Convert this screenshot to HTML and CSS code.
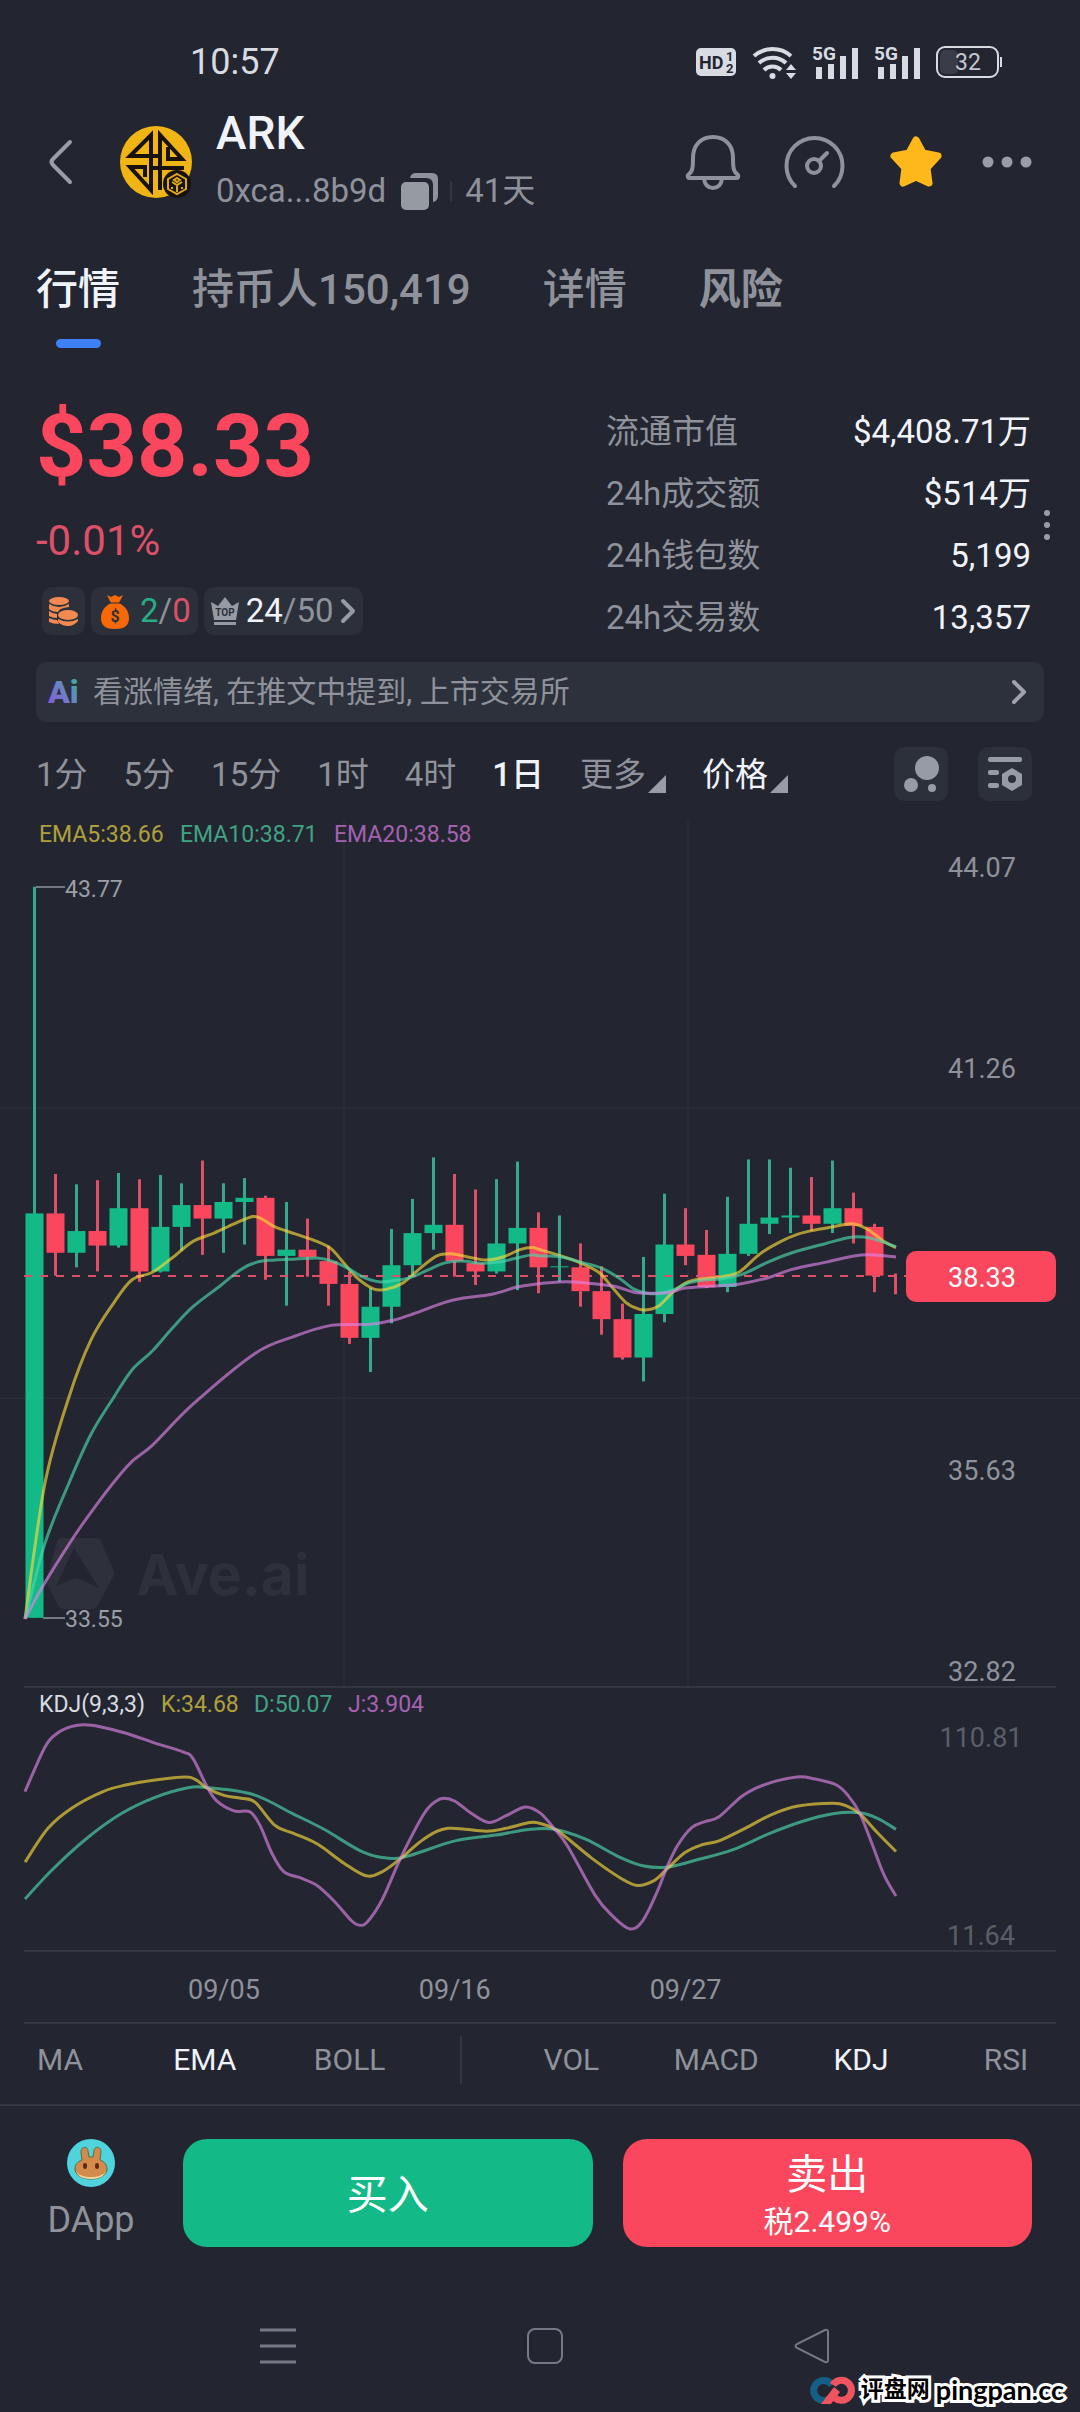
FILE: index.html
```html
<!DOCTYPE html>
<html lang="zh-CN">
  <head>
    <meta charset="UTF-8">
    <meta name="viewport" content="width=device-width, initial-scale=1">
    <title>ARK 行情</title>
    <link rel="stylesheet" href="styles.css">
  </head>

  <body>
    <!-- Status bar -->
    <div class="status-bar">
      <span class="clock">10:57</span>
      <div class="status-icons">
        <svg width="40" height="28" viewBox="0 0 40 28">
          <rect width="40" height="28" rx="5" fill="#d9dbe2"/>
          <text x="3" y="21" class="hd-text">HD</text>
          <text x="30" y="13" class="hd-num">1</text>
          <text x="30" y="25" class="hd-num">2</text>
        </svg>
        <svg width="44" height="34" viewBox="0 0 44 34">
          <g fill="none" stroke="#d9dbe2" stroke-width="4">
            <path d="M2 11a28 28 0 0 1 37 0"/>
            <path d="M7 18a20 20 0 0 1 27 0"/>
            <path d="M12 25a12 12 0 0 1 17 0"/>
          </g>
          <circle cx="20.500" cy="31" r="3" fill="#d9dbe2"/>
          <path d="M34 25l5-6 5 6zM34 28h10l-5 6z" fill="#d9dbe2"/>
        </svg>
        <svg width="46" height="36" viewBox="0 -2 46 36">
          <text x="0" y="14" class="net-text">5G</text>
          <path d="M4 21h6v12H4zM16 18h6v15h-6zM28 10h6v23h-6zM40 2h6v31h-6z" fill="#d9dbe2"/>
        </svg>
        <svg width="46" height="36" viewBox="0 -2 46 36">
          <text x="0" y="14" class="net-text">5G</text>
          <path d="M4 21h6v12H4zM16 18h6v15h-6zM28 10h6v23h-6zM40 2h6v31h-6z" fill="#d9dbe2"/>
        </svg>
        <svg width="66" height="32" viewBox="0 0 66 32">
          <rect x="4" y="4" width="18" height="24" rx="5" fill="#3a3d47"/>
          <rect x="1" y="1" width="61" height="30" rx="8" fill="none" stroke="#d9dbe2" stroke-width="2"/>
          <path d="M65 11v10" stroke="#d9dbe2" stroke-width="2"/>
          <text x="32" y="24" text-anchor="middle" class="battery-text">32</text>
        </svg>
      </div>
    </div>

    <!-- Token header -->
    <header class="header">
      <button class="icon-btn back" aria-label="返回">
        <svg width="24" height="46" viewBox="0 0 24 46">
          <path d="M22 3L5 20q-3 3 0 6l17 17" fill="none" stroke="#9a9da6" stroke-width="4" stroke-linecap="round"/>
        </svg>
      </button>
      <svg class="token-logo" width="72" height="72" viewBox="0 0 72 72">
        <circle cx="36" cy="36" r="36" fill="#f0b415"/>
        <g fill="none" stroke="#17130c" stroke-width="4">
          <path d="M40 30H10L31 9v55L10 41h15v10"/>
          <path d="M31 30h9M40 64V9l22 24H48V21M31 42h33"/>
        </g>
        <circle cx="57" cy="58" r="14" fill="#17130c"/>
        <path d="M57 48l9 5v10l-9 5-9-5V53z" fill="none" stroke="#e0a818" stroke-width="2"/>
        <path d="M52 56l5 3 5-3M57 59v7M52 61v2M62 61v2M57 52l3 2-3 2-3-2z" fill="none" stroke="#e0a818" stroke-width="2"/>
      </svg>
      <div class="token-info">
        <h1>ARK</h1>
        <div class="token-meta">
          <span>0xca...8b9d</span>
          <button class="icon-btn copy" aria-label="复制">
            <svg width="37" height="37" viewBox="0 0 37 37">
              <path d="M9 5q1-5 6-5h16q6 0 6 6v16q0 6-5 7V12q0-7-7-7z" fill="#8e939b"/>
              <rect y="9" width="28" height="28" rx="5" fill="#969ba2"/>
            </svg>
          </button>
          <span class="meta-line"></span>
          <span>41天</span>
        </div>
      </div>
      <div class="header-actions">
        <button class="icon-btn" aria-label="提醒">
          <svg width="54" height="56" viewBox="0 0 54 56">
            <g fill="none" stroke="#8f929b" stroke-width="4" stroke-linejoin="round">
              <path d="M7 24C7 11 15 3 27 3s20 8 20 21c0 12 1 14 5 17 1 2 0 3-2 3H4c-2 0-3-1-2-3 4-3 5-5 5-17z"/>
              <path d="M18 45c1 6 4 9 9 9s8-3 9-9"/>
            </g>
          </svg>
        </button>
        <button class="icon-btn" aria-label="仪表盘">
          <svg width="61" height="54" viewBox="0 0 61 54">
            <g fill="none" stroke="#8f929b" stroke-width="4" stroke-linecap="round">
              <path d="M11 51a28 28 0 1 1 39 0"/>
              <circle cx="30" cy="31" r="7"/>
              <path d="M35 26l8-8"/>
            </g>
          </svg>
        </button>
        <button class="icon-btn" aria-label="收藏">
          <svg width="54" height="52" viewBox="0 0 54 52">
            <path d="M27 4l7 13 15 3-11 12 2 15-13-6-13 6 2-15L5 20l15-3z" fill="#ffb81c" stroke="#ffb81c" stroke-width="7" stroke-linejoin="round"/>
          </svg>
        </button>
        <button class="icon-btn more" aria-label="更多">
          <svg width="50" height="12" viewBox="0 0 50 12">
            <g fill="#9a9da6">
              <circle cx="6" cy="6" r="5.500"/>
              <circle cx="25" cy="6" r="5.500"/>
              <circle cx="44" cy="6" r="5.500"/>
            </g>
          </svg>
        </button>
      </div>
    </header>

    <nav class="tabs">
      <button class="tab active">行情</button>
      <button class="tab">持币人150,419</button>
      <button class="tab">详情</button>
      <button class="tab strong">风险</button>
    </nav>

    <!-- Price and stats -->
    <section class="overview">
      <div class="price-box">
        <div class="price">$38.33</div>
        <div class="change">-0.01%</div>
        <div class="chips">
          <button class="chip chip-coins" aria-label="持仓">
            <svg width="29" height="29" viewBox="0 0 29 29">
              <g fill="#f08a50">
                <ellipse cx="10" cy="4" rx="10" ry="4"/>
                <path d="M0 7q10 6 20 0v3q-10 1-11 5-6 0-9-3z"/>
                <path d="M0 14q4 3 8 3v4q-5 0-8-2zM0 21q4 2 8 2l2 4q-6 0-10-2z"/>
                <ellipse cx="19" cy="18" rx="10" ry="5"/>
                <path d="M9 22q10 5 20 0v2q-4 5-10 5t-10-4z"/>
              </g>
            </svg>
          </button>
          <button class="chip chip-bag">
            <svg width="28" height="35" viewBox="0 0 28 35">
              <path d="M6 1l4 2 4-2 4 2 4-2-4 8c6 3 10 8 10 15 0 8-5 11-14 11S0 32 0 24C0 17 4 12 10 9z" fill="#f96807"/>
              <path d="M8 9h12" stroke="#2b303b" stroke-width="1"/>
              <text x="14" y="28" text-anchor="middle" class="bag-text">$</text>
            </svg>
            <span><span class="up">2</span>/<span class="down">0</span></span>
          </button>
          <button class="chip chip-top">
            <svg width="28" height="28" viewBox="0 0 28 28">
              <path d="M0 5l7 4 7-9 7 9 7-4-3 18H3zM3 25h22v3H3z" fill="#959aa3"/>
              <text x="14" y="19" text-anchor="middle" class="top-text">TOP</text>
            </svg>
            <span><span class="white">24</span>/50</span>
            <svg width="15" height="24" viewBox="0 0 15 24">
              <path d="M2 2l10 10L2 22" fill="none" stroke="#959aa3" stroke-width="4" stroke-linecap="round" stroke-linejoin="round"/>
            </svg>
          </button>
        </div>
      </div>
      <dl class="stats">
        <div><dt>流通市值</dt><dd>$4,408.71万</dd></div>
        <div><dt>24h成交额</dt><dd>$514万</dd></div>
        <div><dt>24h钱包数</dt><dd>5,199</dd></div>
        <div><dt>24h交易数</dt><dd>13,357</dd></div>
      </dl>
      <svg class="stats-more" width="8" height="32" viewBox="0 0 8 32">
        <g fill="#9a9da6">
          <circle cx="4" cy="4" r="3"/>
          <circle cx="4" cy="16" r="3"/>
          <circle cx="4" cy="28" r="3"/>
        </g>
      </svg>
    </section>

    <a class="ai-bar" href="#">
      <svg width="34" height="40" viewBox="0 0 34 40">
        <defs>
          <linearGradient id="ai-fill" x1="0" x2="1" y1="1" y2="0">
            <stop offset="0" stop-color="#8a4fe0"/>
            <stop offset="0.500" stop-color="#6f7fc8"/>
            <stop offset="1" stop-color="#2fb896"/>
          </linearGradient>
        </defs>
        <text x="0" y="31" class="ai-text">Ai</text>
      </svg>
      <span>看涨情绪, 在推文中提到, 上市交易所</span>
      <svg class="ai-arrow" width="15" height="26" viewBox="0 0 15 26">
        <path d="M2 3l10 10L2 23" fill="none" stroke="#a0a3ab" stroke-width="4" stroke-linecap="round" stroke-linejoin="round"/>
      </svg>
    </a>

    <!-- Intervals -->
    <div class="intervals">
      <button>1分</button>
      <button>5分</button>
      <button>15分</button>
      <button>1时</button>
      <button>4时</button>
      <button class="active">1日</button>
      <button class="with-caret">更多<span class="caret"></span></button>
      <button class="with-caret price-mode">价格<span class="caret"></span></button>
      <div class="chart-tools">
        <button class="tool" aria-label="气泡">
          <svg width="36" height="38" viewBox="0 0 36 38">
            <g fill="#979ba5">
              <circle cx="24" cy="13" r="12"/>
              <circle cx="8" cy="30" r="7"/>
              <circle cx="29" cy="33" r="4"/>
            </g>
          </svg>
        </button>
        <button class="tool" aria-label="指标设置">
          <svg width="34" height="34" viewBox="0 0 34 34">
            <g fill="#979ba5">
              <rect width="34" height="5" rx="2"/>
              <rect y="13" width="11" height="5" rx="2"/>
              <rect y="26" width="11" height="5" rx="2"/>
              <path d="M24 11l10 6v11l-10 6-10-6V17z"/>
            </g>
            <circle cx="24" cy="22" r="4" fill="#2b303b"/>
          </svg>
        </button>
      </div>
    </div>

    <!-- Price chart -->
    <svg class="chart" viewBox="0 0 1080 866">
      <g class="grid">
        <path d="M0 288H1080M0 578H1080M344 0V866M688 0V866"/>
      </g>
      <g class="brand-mark">
        <path fill-rule="evenodd" d="M61 718h34q4 0 6 3l12 28q2 4 0 8l-15 28q-2 4-6 4H64q-4 0-6-4l-11-21q-2-3 0-7l10-35q1-4 4-4zM74 728L56 766l14-6 6-2 6 2 17 8z"/>
        <text x="136" y="775">Ave.ai</text>
      </g>
      <g id="candles"></g>
      <path class="now-line" d="M24 456H906"/>
      <g id="ema"></g>
      <g class="legend">
        <text x="39" y="22" class="c-yellow">EMA5:38.66</text>
        <text x="180" y="22" class="c-green">EMA10:38.71</text>
        <text x="334" y="22" class="c-purple">EMA20:38.58</text>
      </g>
      <path class="tick" d="M36 67H65M43 798H65"/>
      <g class="mark">
        <text x="65" y="77">43.77</text>
        <text x="65" y="807">33.55</text>
      </g>
      <g class="axis">
        <text x="982" y="57">44.07</text>
        <text x="982" y="258">41.26</text>
        <text x="982" y="660">35.63</text>
        <text x="982" y="861">32.82</text>
      </g>
      <rect x="906" y="431" width="150" height="51" rx="10" fill="#fa475d"/>
      <text x="982" y="467" class="now-text">38.33</text>
    </svg>

    <!-- KDJ chart -->
    <svg class="chart" viewBox="0 0 1080 264">
      <path class="rule" d="M24 1H1056"/>
      <g id="kdj"></g>
      <g class="legend">
        <text x="39" y="26" class="c-white">KDJ(9,3,3)</text>
        <text x="161" y="26" class="c-yellow">K:34.68</text>
        <text x="254" y="26" class="c-green">D:50.07</text>
        <text x="348" y="26" class="c-purple">J:3.904</text>
      </g>
      <g class="axis dim">
        <text x="981" y="61">110.81</text>
        <text x="981" y="259">11.64</text>
      </g>
    </svg>

    <div class="dates">
      <span>09/05</span>
      <span>09/16</span>
      <span>09/27</span>
    </div>

    <div class="indicators">
      <button>MA</button>
      <button class="active">EMA</button>
      <button>BOLL</button>
      <span class="split"></span>
      <button>VOL</button>
      <button>MACD</button>
      <button class="active">KDJ</button>
      <button>RSI</button>
    </div>

    <footer class="trade-bar">
      <a class="dapp" href="#">
        <svg width="48" height="48" viewBox="0 0 48 48">
          <circle cx="24" cy="24" r="24" fill="#4fd3dc"/>
          <path d="M15 21l-1-8c0-6 7-6 7-1l1 6h4l1-6c0-5 7-5 7 1l-1 8c5 2 7 5 7 9 0 6-7 10-16 10S8 36 8 30c0-4 2-7 7-9z" fill="#d38a4d" stroke="#5c6b3c" stroke-width="1"/>
          <path d="M9 32c2 4 8 6 15 6s13-2 15-6c-1 5-7 8-15 8S10 37 9 32z" fill="#f6d9a0"/>
          <ellipse cx="18" cy="27" rx="2" ry="3" fill="#5a2a10"/>
          <ellipse cx="30" cy="27" rx="2" ry="3" fill="#5a2a10"/>
        </svg>
        <span>DApp</span>
      </a>
      <button class="trade buy">买入</button>
      <button class="trade sell">卖出<small>税2.499%</small></button>
    </footer>

    <!-- System navigation -->
    <div class="system-nav">
      <button class="icon-btn" aria-label="最近任务">
        <svg width="36" height="36" viewBox="0 0 36 36">
          <path d="M0 2h36M0 18h36M0 34h36" stroke="#757985" stroke-width="3"/>
        </svg>
      </button>
      <button class="icon-btn" aria-label="主页">
        <svg width="36" height="36" viewBox="0 0 36 36">
          <rect x="1" y="1" width="34" height="34" rx="7" fill="none" stroke="#757985" stroke-width="2"/>
        </svg>
      </button>
      <button class="icon-btn" aria-label="返回上一页">
        <svg width="36" height="36" viewBox="0 0 36 36">
          <path d="M31 2L3 16q-3 2 0 4l28 14q3 1 3-2V4q0-3-3-2z" fill="none" stroke="#757985" stroke-width="2"/>
        </svg>
      </button>
    </div>

    <div class="site-mark">
      <svg width="46" height="30" viewBox="0 0 46 30">
        <path d="M20 24a10 10 0 1 1 3-14" fill="none" stroke="#155f86" stroke-width="7"/>
        <path d="M24 10a10 10 0 1 1 2 13" fill="none" stroke="#ef5560" stroke-width="7"/>
        <path d="M12 29h10l9-12-6-5z" fill="#ef5560"/>
      </svg>
      <span class="site-cn">评盘网</span>
      <span class="site-en">pingpan.cc</span>
    </div>

    <script src="chart.js"></script>
  </body>
</html>
```
FILE: styles.css
```css
* {
  box-sizing: border-box;
}

body {
  margin: 0;
  position: relative;
  background-color: #232630;
  color: #8f929b;
  font-family: Roboto, "Noto Sans CJK SC", sans-serif;
  font-size: 33px;
}

button {
  padding: 0;
  border: none;
  background: none;
  color: inherit;
  font: inherit;
  white-space: nowrap;
  cursor: pointer;
}

a {
  color: inherit;
  text-decoration: none;
}

svg {
  display: block;
  flex: none;
  overflow: visible;
}

/* Status bar */
.status-bar {
  display: flex;
  align-items: center;
  justify-content: space-between;
  padding: 44px 78px 0 190px;
}

.clock {
  color: #d9dbe2;
  font-size: 36px;
  line-height: 36px;
}

.status-icons {
  display: flex;
  align-items: center;
  gap: 16px;
}

.hd-text {
  font-size: 18px;
  font-weight: 700;
  fill: #232630;
}

.hd-num {
  font-size: 13px;
  font-weight: 700;
  fill: #232630;
}

.net-text {
  font-size: 19px;
  font-weight: 700;
  fill: #d9dbe2;
}

.battery-text {
  font-size: 23px;
  fill: #c5c7ce;
}

/* Header */
.header {
  display: flex;
  align-items: center;
  padding: 28px 48px 0;
}

.token-logo {
  margin-left: 48px;
}

.token-info {
  margin-left: 24px;
}

.token-info h1 {
  margin: 0 0 8px;
  color: #f1f3fa;
  font-size: 46px;
  font-weight: 500;
  line-height: 50px;
}

.token-meta {
  display: flex;
  align-items: center;
  line-height: 50px;
}

.copy {
  margin-left: 15px;
}

.meta-line {
  width: 2px;
  height: 20px;
  margin: 0 13px 0 12px;
  background-color: #343741;
}

.header-actions {
  display: flex;
  align-items: center;
  gap: 44px;
  margin-left: auto;
}

.more {
  margin-left: -5px;
}

/* Tabs */
.tabs {
  display: flex;
  align-items: flex-start;
  gap: 72px;
  padding: 44px 36px 0;
}

.tab {
  font-size: 42px;
  font-weight: 500;
  line-height: 60px;
}

.tab.active {
  color: #f1f3fa;
}

.tab.strong {
  font-weight: 700;
}

.tab::after {
  content: "";
  display: block;
  width: 45px;
  height: 9px;
  margin: 19px auto 0;
  border-radius: 5px;
}

.tab.active::after {
  background-color: #3f80f7;
}

/* Overview */
.overview {
  display: flex;
  padding: 53px 29px 0 36px;
}

.price-box {
  flex: 1;
}

.price {
  color: #fa475d;
  font-size: 88px;
  font-weight: 700;
  line-height: 90px;
}

.change {
  margin-top: 25px;
  color: #dd5068;
  font-size: 42px;
  line-height: 50px;
}

.chips {
  display: flex;
  gap: 6px;
  margin: 21px 0 0 6px;
}

.chip {
  display: flex;
  align-items: center;
  height: 48px;
  padding: 0 7px;
  border-radius: 10px;
  background-color: #2b303b;
  line-height: 48px;
}

.chip-bag {
  gap: 11px;
  padding: 0 7px 0 10px;
}

.chip-top {
  gap: 7px;
}

.bag-text {
  font-size: 16px;
  font-weight: 700;
  fill: #2b303b;
}

.top-text {
  font-size: 10px;
  font-weight: 700;
  fill: #2b303b;
}

.up {
  color: #27ad85;
}

.down {
  color: #dd5068;
}

.white {
  color: #f1f3fa;
}

.stats {
  width: 425px;
  margin: 0;
}

.stats div {
  display: flex;
  justify-content: space-between;
  line-height: 62px;
}

.stats dd {
  margin: 0;
  color: #f1f3fa;
}

.stats-more {
  align-self: center;
  margin-left: 12px;
}

.ai-bar {
  display: flex;
  align-items: center;
  height: 60px;
  margin: 13px 36px 0;
  padding: 0 17px 0 12px;
  border-radius: 10px;
  background-color: #2c313c;
  font-size: 30px;
  line-height: 40px;
}

.ai-bar span {
  margin-left: 11px;
}

.ai-text {
  font-size: 32px;
  font-weight: 900;
  fill: url(#ai-fill);
}

.ai-arrow {
  margin-left: auto;
}

/* Interval row */
.intervals {
  display: flex;
  align-items: center;
  gap: 36px;
  padding: 24px 48px 0 36px;
  line-height: 54px;
}

.intervals > button {
  padding-top: 2px;
}

.intervals .active {
  color: #f1f3fa;
  font-weight: 500;
}

.with-caret {
  display: flex;
  align-items: center;
  gap: 2px;
}

.intervals .price-mode {
  color: #f1f3fa;
}

.caret {
  align-self: flex-end;
  margin-bottom: 9px;
  border-left: 18px solid transparent;
  border-bottom: 18px solid #9a9da6;
}

.chart-tools {
  display: flex;
  gap: 30px;
  height: 54px;
  margin-left: auto;
}

.tool {
  display: flex;
  align-items: center;
  justify-content: center;
  width: 54px;
  height: 54px;
  border-radius: 10px;
  background-color: #2b303b;
}

/* Charts */
.chart {
  width: 100%;
}

.intervals + .chart {
  margin-top: 18px;
}

.grid path {
  fill: none;
  stroke: #292c36;
  stroke-width: 2;
}

.rule {
  stroke: #343741;
  stroke-width: 2;
}

.brand-mark {
  fill: #2e313b;
}

.brand-mark text {
  font-family: Inter, sans-serif;
  font-size: 57px;
  font-weight: 700;
}

.body-up {
  fill: #13b987;
}

.body-down {
  fill: #fa475d;
}

.wick-up {
  fill: #36a98a;
}

.wick-down {
  fill: #dd5068;
}

.now-line {
  stroke: #dd5068;
  stroke-width: 2;
  stroke-dasharray: 8 8;
}

.line {
  fill: none;
  stroke-width: 3;
  opacity: 0.65;
}

.line-yellow {
  stroke: #f8d93c;
}

.line-green {
  stroke: #4bd8ac;
}

.line-purple {
  stroke: #dc82e6;
}

.legend text,
.mark text {
  font-size: 23px;
}

.mark text {
  fill: #9b9ea7;
}

.tick {
  stroke: #767984;
  stroke-width: 2;
}

.c-yellow {
  fill: #b0a03c;
}

.c-green {
  fill: #3fa384;
}

.c-purple {
  fill: #a562b0;
}

.c-white {
  fill: #d9dbe2;
}

.axis text,
.now-text {
  font-size: 27px;
  text-anchor: middle;
  fill: #8f929b;
}

.axis.dim text {
  fill: #5b5e68;
}

.chart .now-text {
  fill: #fff;
}

.dates {
  display: flex;
  gap: 159px;
  margin: 0 24px;
  padding: 6px 0 0 164px;
  border-top: 2px solid #343741;
  border-bottom: 2px solid #343741;
  font-size: 27px;
  line-height: 64px;
}

.indicators {
  display: flex;
  justify-content: space-between;
  padding: 12px 26px 20px 12px;
  border-bottom: 2px solid #343741;
  font-size: 30px;
  line-height: 48px;
}

.indicators button {
  width: 96px;
}

.indicators .active {
  color: #f1f3fa;
}

.split {
  width: 2px;
  margin: 0 13px;
  background-color: #343741;
}

/* Trade bar */
.trade-bar {
  display: flex;
  align-items: flex-start;
  gap: 30px;
  padding: 33px 48px 0 36px;
}

.dapp {
  display: flex;
  flex-direction: column;
  align-items: center;
  gap: 12px;
  width: 110px;
  margin-right: 7px;
  font-size: 36px;
  line-height: 42px;
}

.trade {
  flex: 1;
  height: 108px;
  padding-top: 4px;
  border-radius: 24px;
  color: #fff;
  font-size: 41px;
  line-height: 50px;
}

.buy {
  background-color: #13b987;
}

.sell {
  padding-top: 8px;
  background-color: #fa475d;
}

.trade small {
  display: block;
  font-size: 30px;
  line-height: 44px;
}

/* System navigation */
.system-nav {
  display: flex;
  justify-content: space-between;
  padding: 81px 250px 48px 260px;
}

.site-mark {
  position: absolute;
  right: 16px;
  bottom: 4px;
  display: flex;
  align-items: center;
  gap: 6px;
  color: #000;
  font-weight: 700;
  line-height: 36px;
}

.site-mark span {
  -webkit-text-stroke: 6px #fff;
  paint-order: stroke fill;
}

.site-cn {
  font-size: 23px;
}

.site-en {
  font-family: Lato, sans-serif;
  font-size: 27px;
}
```
FILE: chart.js
```js
// top wick, body top, body bottom, bottom wick, 1 = up
const candles = [
  [74, 389, 779, 779, 1], [351, 389, 427, 449, 0], [361, 406, 427, 441, 1],
  [357, 406, 420, 445, 0], [350, 384, 420, 422, 1], [356, 384, 445, 455, 0],
  [352, 402, 445, 446, 1], [360, 381, 402, 425, 1], [338, 381, 394, 429, 0],
  [360, 378, 394, 427, 1], [355, 374, 378, 419, 1], [372, 374, 430, 453, 0],
  [378, 424, 430, 478, 1], [394, 424, 431, 450, 0], [420, 435, 457, 478, 0],
  [445, 457, 509, 515, 0], [461, 479, 509, 542, 1], [404, 439, 479, 495, 1],
  [375, 408, 439, 449, 1], [335, 400, 408, 424, 1], [351, 400, 435, 450, 0],
  [366, 437, 445, 458, 0], [356, 418, 445, 447, 1], [339, 403, 418, 463, 1],
  [388, 403, 441, 466, 0], [391, 440, 441, 455, 1], [418, 441, 464, 479, 0],
  [440, 464, 491, 506, 0], [476, 491, 528, 530, 0], [431, 486, 528, 551, 1],
  [370, 419, 486, 494, 1], [384, 419, 430, 439, 0], [405, 429, 460, 461, 0],
  [373, 428, 460, 465, 1], [337, 399, 428, 430, 1], [337, 393, 399, 409, 1],
  [345, 391, 393, 408, 1], [354, 391, 399, 406, 0], [338, 384, 399, 408, 1],
  [369, 384, 401, 418, 0], [399, 402, 449, 465, 0], [447, 447, 447, 467, 0],
];

const ema5 = [25,780, 45,649, 69,566, 91,511, 114,475, 132,453, 152,446, 172,432, 193,416, 214,408, 234,399, 253,392, 263,395, 275,402, 296,409, 317,416, 331,423, 344,437, 358,452, 374,462, 387,462, 403,456, 420,442, 437,430, 451,428, 468,431, 486,434, 503,431, 520,424, 532,422, 540,424, 561,430, 581,437, 599,446, 612,460, 626,475, 638,481, 647,482, 659,478, 674,464, 688,455, 702,452, 723,450, 740,445, 760,428, 781,416, 798,409, 815,405, 833,402, 852,399, 867,404, 884,416, 896,422];
const ema10 = [25,780, 45,707, 69,649, 91,602, 114,566, 132,540, 152,522, 172,500, 193,479, 220,459, 241,443, 257,436, 275,434, 296,433, 317,432, 332,435, 348,442, 362,450, 379,455, 393,454, 410,451, 427,444, 444,437, 461,435, 482,437, 499,436, 517,432, 532,429, 540,430, 561,431, 581,436, 602,442, 620,452, 634,462, 647,466, 661,466, 675,462, 689,456, 706,453, 722,452, 744,447, 768,436, 792,427, 826,418, 851,412, 871,413, 896,421];
const ema20 = [25,780, 45,745, 83,688, 127,633, 152,613, 193,573, 255,524, 293,508, 331,497, 370,496, 393,492, 413,486, 444,475, 461,471, 492,467, 517,460, 537,457, 565,455, 585,456, 613,459, 634,465, 651,466, 671,465, 685,461, 716,459, 740,457, 768,451, 792,443, 826,436, 854,430, 871,429, 896,431];

const lineK = [25,181, 48,146, 72,125, 103,108, 127,101, 155,96, 186,93, 196,96, 208,105, 224,112, 241,115, 255,119, 275,143, 293,151, 317,162, 344,182, 366,195, 382,191, 401,177, 424,157, 448,146, 486,149, 506,146, 530,140, 540,141, 557,148, 592,177, 620,197, 637,205, 654,200, 667,188, 685,171, 702,163, 719,159, 747,145, 771,132, 798,123, 833,120, 847,123, 860,131, 877,150, 896,170];
const lineD = [25,219, 52,189, 86,157, 121,131, 155,114, 188,104, 208,104, 253,111, 293,131, 324,147, 362,170, 389,177, 410,174, 455,159, 496,153, 530,147, 554,147, 585,157, 620,176, 644,185, 668,186, 699,178, 733,168, 768,152, 802,139, 833,131, 860,130, 878,136, 896,147];
const lineJ = [25,108, 45,62, 57,48, 71,41, 84,39, 100,41, 127,48, 155,58, 183,67, 193,74, 207,103, 217,118, 234,128, 250,129, 260,143, 272,172, 284,191, 300,197, 317,205, 334,221, 351,241, 359,246, 367,243, 382,220, 401,176, 424,131, 436,118, 444,115, 455,118, 472,131, 489,140, 506,133, 525,124, 540,130, 554,146, 568,165, 595,215, 612,236, 630,250, 643,241, 657,212, 667,186, 678,163, 692,145, 705,139, 719,134, 743,112, 767,100, 797,93, 815,95, 836,101, 848,112, 860,131, 872,162, 884,194, 896,216];

const priceY = (v) => v * 1.037 - 10;
const kdjY = (v) => v * 0.968 + 1;

function add(parent, tag, attrs) {
  const el = document.createElementNS("http://www.w3.org/2000/svg", tag);
  for (const name in attrs) el.setAttribute(name, attrs[name]);
  document.getElementById(parent).appendChild(el);
}

function drawCandles() {
  candles.forEach(([high, top, bottom, low, up], i) => {
    const x = 34.5 + i * 21;
    const side = up ? "up" : "down";
    add("candles", "rect", {
      class: "wick-" + side,
      x: x - 1.5,
      y: priceY(high),
      width: 3,
      height: priceY(low) - priceY(high),
    });
    add("candles", "rect", {
      class: "body-" + side,
      x: x - 9,
      y: priceY(top),
      width: 18,
      height: priceY(bottom) - priceY(top),
    });
  });
}

// Smooth curve through all points
function drawLine(parent, color, data, scale) {
  const p = [];
  for (let i = 0; i < data.length; i += 2) p.push([data[i], scale(data[i + 1])]);
  let d = "M" + p[0];
  for (let i = 0; i < p.length - 1; i++) {
    const a = p[i - 1] || p[i];
    const b = p[i];
    const c = p[i + 1];
    const e = p[i + 2] || c;
    d += "C" + [
      b[0] + (c[0] - a[0]) / 6, b[1] + (c[1] - a[1]) / 6,
      c[0] - (e[0] - b[0]) / 6, c[1] - (e[1] - b[1]) / 6,
      c[0], c[1],
    ];
  }
  add(parent, "path", { class: "line line-" + color, d: d });
}

drawCandles();
drawLine("ema", "yellow", ema5, priceY);
drawLine("ema", "green", ema10, priceY);
drawLine("ema", "purple", ema20, priceY);
drawLine("kdj", "green", lineD, kdjY);
drawLine("kdj", "yellow", lineK, kdjY);
drawLine("kdj", "purple", lineJ, kdjY);
```
